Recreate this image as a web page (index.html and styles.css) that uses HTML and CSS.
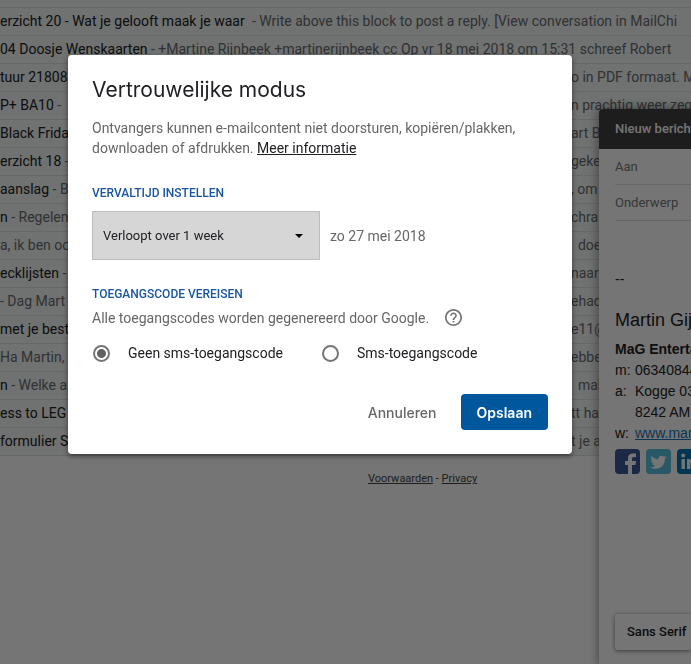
FILE: index.html
```html
<!DOCTYPE html>
<html lang="nl">
<head>
<meta charset="utf-8">
<meta name="viewport" content="width=device-width, initial-scale=1">
<title>Vertrouwelijke modus</title>
<link rel="stylesheet" href="styles.css">
</head>
<body>
<main class="inbox">
  <div class="mail-list">
    <div class="mail mail-top"></div>
    <div class="mail mail-wide"><span class="cell"><b>erzicht 20 - Wat je gelooft maak je waar</b></span><span class="cell">- Write above this block to post a reply. [View conversation in MailChi</span></div>
    <div class="mail mail-wide mail-short"><span class="cell"><b>04 Doosje Wenskaarten</b></span><span class="cell">- +Martine Rijnbeek +martinerijnbeek cc Op vr 18 mei 2018 om 15:31 schreef Robert</span></div>
    <div class="mail"><span class="cell"><b>tuur 21808</b></span><span class="cell">o in PDF formaat. M</span></div>
    <div class="mail"><span class="cell"><b>P+ BA10</b> -</span><span class="cell">n prachtig weer zeg</span></div>
    <div class="mail"><span class="cell"><b>Black Frida</b></span><span class="cell">art B</span></div>
    <div class="mail"><span class="cell"><b>erzicht 18</b> -</span><span class="cell">geke</span></div>
    <div class="mail"><span class="cell"><b>aanslag</b> - Be</span><span class="cell">, om</span></div>
    <div class="mail"><span class="cell"><b>n</b> - Regelen</span><span class="cell">chraa</span></div>
    <div class="mail"><span class="cell">a, ik ben oo</span><span class="cell">&nbsp; doe</span></div>
    <div class="mail"><span class="cell"><b>ecklijsten</b> -</span><span class="cell">naar</span></div>
    <div class="mail"><span class="cell">- Dag Mart</span><span class="cell">ehad</span></div>
    <div class="mail"><span class="cell"><b>met je beste</b></span><span class="cell">e11@</span></div>
    <div class="mail"><span class="cell">Ha Martin,</span><span class="cell">ebbe</span></div>
    <div class="mail"><span class="cell"><b>n</b> - Welke a</span><span class="cell">&nbsp; mak</span></div>
    <div class="mail"><span class="cell"><b>ess to LEG</b></span><span class="cell">tt ha</span></div>
    <div class="mail"><span class="cell"><b>formulier St</b></span><span class="cell">t je a</span></div>
  </div>
  <footer class="legal"><a href="#">Voorwaarden</a> - <a href="#">Privacy</a></footer>
</main>

<section class="compose">
  <header class="compose-head">Nieuw bericht</header>
  <div class="compose-body">
    <div class="field">Aan</div>
    <div class="field">Onderwerp</div>
    <div class="signature">
      <p class="dashes">--</p>
      <p class="sig-name">Martin Gij</p>
      <p class="sig-company">MaG Enterta</p>
      <dl class="contact">
        <dt>m:</dt><dd>06340844</dd>
        <dt>a:</dt><dd>Kogge 03<br>8242 AM</dd>
        <dt>w:</dt><dd><a href="#">www.mar</a></dd>
      </dl>
      <div class="social">
        <svg viewBox="0 0 25 25" aria-label="Facebook"><rect width="25" height="25" rx="4" fill="#3b5998"/><path d="M13 25v-9h-3v-4h3V9.500C13 6 15 4.500 18 4.500h3V8h-2c-1.600 0-2 .7-2 2v2h4l-.6 4H17v9z" fill="#fff"/></svg>
        <svg viewBox="0 0 25 25" aria-label="Twitter"><rect width="25" height="25" rx="4" fill="#5bc0de"/><path d="M20.500 8l-2 .6c.7-.4 1.200-1 1.500-1.800l-2.200.9c-2.300-2.300-6-.5-5.300 2.700-3 0-5.300-1.500-7-3.600-1 1.700-.5 3.600 1 4.600L5 11c0 1.800 1 3 2.800 3.500H6.200c.5 1.400 1.600 2.200 3.200 2.300-1.500 1.200-3.100 1.600-4.900 1.400 6.500 3.800 14.400.4 14.300-8.200z" fill="#fff"/></svg>
        <svg viewBox="0 0 25 25" aria-label="LinkedIn"><rect width="25" height="25" rx="4" fill="#0077b5"/><path d="M4.500 10h3.400v10H4.500zM10 10h3.200v1.500c1.700-2.800 7.300-2.300 7.300 2.700V20h-3.400v-5.200c0-3-3.700-2.600-3.700 0V20H10z" fill="#fff"/><circle cx="6.200" cy="6.500" r="2" fill="#fff"/></svg>
      </div>
    </div>
    <div class="format-bar">Sans Serif</div>
  </div>
</section>

<div class="backdrop"></div>

<form class="dialog" role="dialog" aria-labelledby="title">
  <h1 id="title">Vertrouwelijke modus</h1>
  <p class="intro">Ontvangers kunnen e-mailcontent niet doorsturen, kopiëren/plakken, downloaden of afdrukken. <a href="#">Meer informatie</a></p>
  <h2><label for="expiry">VERVALTIJD INSTELLEN</label></h2>
  <div class="expiry">
    <div class="select-wrap">
      <select id="expiry"><option>Verloopt over 1 week</option></select>
      <svg class="arrow" viewBox="0 0 8 4" aria-hidden="true"><path d="M0 0h8L4 4z"/></svg>
    </div>
    <span>zo 27 mei 2018</span>
  </div>
  <h2>TOEGANGSCODE VEREISEN</h2>
  <div class="note">
    <span>Alle toegangscodes worden gegenereerd door Google.</span>
    <svg class="help" viewBox="2 2 20 20" aria-hidden="true"><path fill="#757575" d="M11 18h2v-2h-2v2zm1-16C6.480 2 2 6.480 2 12s4.480 10 10 10 10-4.480 10-10S17.520 2 12 2zm0 18c-4.410 0-8-3.590-8-8s3.590-8 8-8 8 3.590 8 8-3.590 8-8 8zm0-14c-2.210 0-4 1.790-4 4h2c0-1.100.9-2 2-2s2 .9 2 2c0 2-3 1.750-3 5h2c0-2.250 3-2.500 3-5 0-2.210-1.790-4-4-4z"/></svg>
  </div>
  <div class="choices">
    <label><input type="radio" name="code" checked>Geen sms-toegangscode</label>
    <label><input type="radio" name="code">Sms-toegangscode</label>
  </div>
  <div class="actions">
    <button type="button" class="cancel">Annuleren</button>
    <button type="button" class="save">Opslaan</button>
  </div>
</form>
</body>
</html>
```
FILE: styles.css
```css
* { box-sizing: border-box; }

body {
  margin: 0;
  min-height: 100vh;
  overflow: hidden;
  background: #fff;
  color: #202124;
  font: 14px/20px Roboto, sans-serif;
}

h1, h2, p, dl, dd { margin: 0; }

/* Inbox */
.mail {
  display: grid;
  grid-template-columns: 571px 1fr;
  height: 28px;
  border-bottom: 1px solid #dfe4e4;
  background: #f3f6f6;
  color: #6a6d70;
  line-height: 27px;
}
.mail-top { height: 8px; }
.mail-wide { grid-template-columns: 252px 1fr; }
.mail-short { grid-template-columns: 151px 1fr; }
.cell {
  min-width: 0;
  overflow: hidden;
  white-space: nowrap;
}
.cell b { color: #202124; font-weight: 400; }

.legal {
  padding: 13px 0 0 368px;
  color: #444;
  font-size: 11px;
}
.legal a { color: inherit; }

/* Compose window */
.compose {
  position: absolute;
  inset: 109px 0 0 599px;
  display: flex;
  flex-direction: column;
  overflow: hidden;
  border-radius: 4px 0 0 0;
  background: #fff;
  box-shadow: 0 0 8px 2px rgba(0, 0, 0, .35);
  white-space: nowrap;
}
.compose-head {
  padding: 10px 16px;
  background: #404040;
  color: #fff;
  font-size: 13px;
  font-weight: 500;
}
.compose-body {
  display: flex;
  flex: 1;
  flex-direction: column;
  padding: 0 0 14px 16px;
}
.field {
  height: 36px;
  border-bottom: 1px solid #e0e0e0;
  color: #777;
  font-size: 13px;
  line-height: 36px;
}
.signature {
  padding-top: 48px;
  color: #222;
  font: 14px/21px "Liberation Sans", Arial, sans-serif;
}
.sig-name { padding: 20px 0 8px; font-size: 18px; }
.sig-company { font-weight: 700; }
.contact {
  display: grid;
  grid-template-columns: 20px 1fr;
}
.contact a { color: #1976b8; }
.social { display: flex; gap: 6px; padding-top: 5px; }
.social svg { flex: none; width: 25px; height: 25px; }
.format-bar {
  margin-top: auto;
  padding: 8px 12px;
  border-radius: 2px;
  box-shadow: 0 1px 4px rgba(0, 0, 0, .5);
  font-size: 13px;
  font-weight: 500;
}

.backdrop {
  position: fixed;
  inset: 0;
  background: rgba(0, 0, 0, .54);
}

/* Dialog */
.dialog {
  position: absolute;
  top: 55px;
  left: 68px;
  width: 504px;
  max-width: 100%;
  padding: 20px 24px 24px;
  border-radius: 4px;
  background: #fff;
  box-shadow: 0 2px 5px rgba(0, 0, 0, .5);
  color: #666;
}
.dialog h1 {
  color: #202124;
  font: 400 21px/30px Inter, sans-serif;
}
.intro { padding: 13px 0 25px; }
.intro a { color: #202124; }
.dialog h2 {
  color: #1a56a0;
  font-size: 12px;
  font-weight: 500;
  line-height: 20px;
}
.expiry {
  display: flex;
  align-items: center;
  gap: 10px;
  padding: 8px 0 24px;
}
.select-wrap { position: relative; width: 228px; }
.select-wrap select {
  display: block;
  width: 100%;
  height: 49px;
  padding: 0 10px;
  border: 1px solid #bdbdbd;
  border-radius: 0;
  background: #d6d6d6;
  color: #202124;
  font: 13px Roboto, sans-serif;
  appearance: none;
}
.arrow {
  position: absolute;
  top: 23px;
  right: 17px;
  width: 8px;
  height: 4px;
}
.note {
  display: flex;
  align-items: center;
  gap: 16px;
  height: 27px;
}
.help { width: 17px; height: 17px; }
.choices {
  display: flex;
  gap: 38px;
  padding: 12px 0 31px;
  color: #202124;
}
.choices label { display: flex; align-items: center; }
.choices input {
  flex: none;
  width: 17px;
  height: 17px;
  margin: 0 18px 0 1px;
  border: 2px solid #757575;
  border-radius: 50%;
  appearance: none;
}
.choices input:checked {
  background: radial-gradient(circle, #616161 4px, transparent 5px);
}
.actions { display: flex; justify-content: flex-end; gap: 8px; }
.actions button {
  height: 36px;
  padding: 0 16px;
  border: 0;
  border-radius: 4px;
  font: 500 14px Inter, sans-serif;
}
.cancel { background: none; color: #666; }
.actions .save { background: #01579b; color: #fff; font-weight: 600; }
```
